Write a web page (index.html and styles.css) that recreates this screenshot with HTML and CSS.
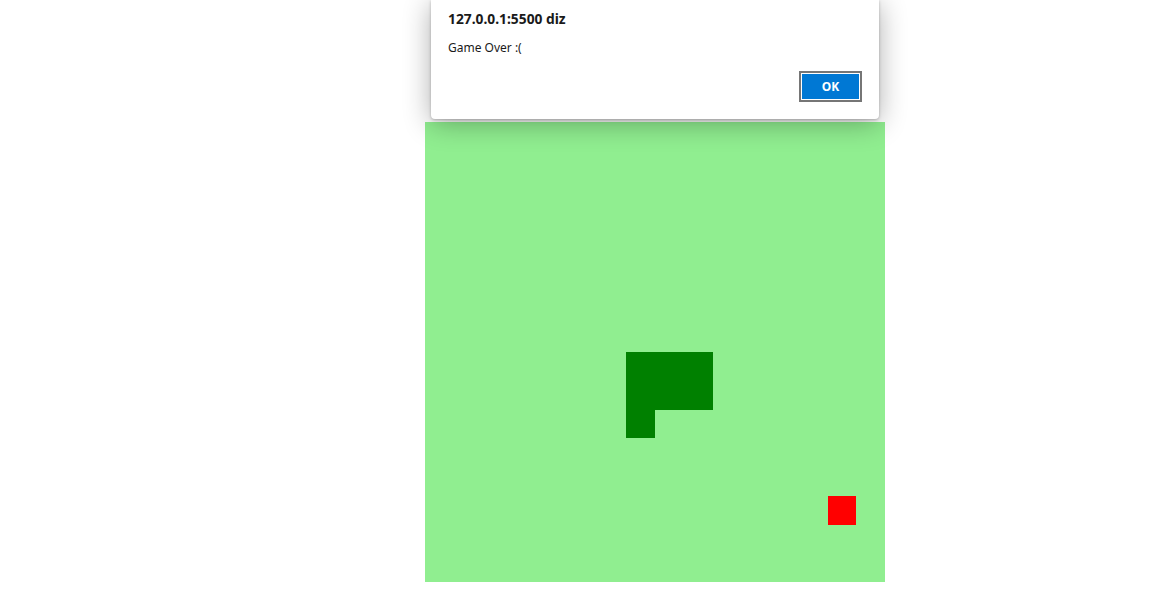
FILE: index.html
```html
<!DOCTYPE html>
<html>
<head>
<meta charset="utf-8">
<link rel="stylesheet" href="styles.css">
</head>
<body>
<div class="stage">
  <div class="board">
    <div class="cell snake" style="grid-column:8;grid-row:9"></div>
    <div class="cell snake" style="grid-column:9;grid-row:9"></div>
    <div class="cell snake" style="grid-column:10;grid-row:9"></div>
    <div class="cell snake" style="grid-column:8;grid-row:10"></div>
    <div class="cell snake" style="grid-column:9;grid-row:10"></div>
    <div class="cell snake" style="grid-column:10;grid-row:10"></div>
    <div class="cell snake" style="grid-column:8;grid-row:11"></div>
    <div class="cell food" style="grid-column:15;grid-row:14"></div>
  </div>
</div>
<div class="dialog">
  <div class="dialog-title">127.0.0.1:5500 diz</div>
  <div class="dialog-msg">Game Over :(</div>
  <div class="dialog-actions">
    <button class="ok">OK</button>
  </div>
</div>
</body>
</html>
```
FILE: styles.css
```css
html, body {
  margin: 0;
  padding: 0;
  background: #fff;
}
.stage {
  padding: 122px 0 0 425px;
}
.board {
  width: 460px;
  height: 460px;
  background: #90ee90;
  display: grid;
  grid-template-columns: repeat(16, 28.75px);
  grid-template-rows: repeat(16, 28.75px);
}
.snake { background: #008000; }
.food { background: #ff0000; }
.dialog {
  position: absolute;
  left: 431px;
  top: 0;
  width: 448px;
  height: 119px;
  box-sizing: border-box;
  background: #fff;
  border-radius: 0 0 4px 4px;
  box-shadow: 0 4px 28px rgba(0,0,0,0.32), 0 1px 3px rgba(0,0,0,0.25);
  padding: 10px 17px 0 17px;
  font-family: "Noto Sans", "Open Sans", sans-serif;
  color: #1a1a1a;
}
.dialog-title {
  font-size: 13.8px;
  font-weight: bold;
  line-height: 18px;
}
.dialog-msg {
  font-size: 12px;
  line-height: 16px;
  margin-top: 12px;
}
.dialog-actions {
  display: flex;
  justify-content: flex-end;
  margin-top: 15px;
}
.ok {
  width: 63px;
  height: 31px;
  box-sizing: border-box;
  border: 2px solid #767676;
  box-shadow: inset 0 0 0 1px #fff;
  background: #0078d4;
  color: #fff;
  font-family: "Noto Sans", "Open Sans", sans-serif;
  font-weight: bold;
  font-size: 12px;
  padding: 0;
  margin-right: 0;
}
```
